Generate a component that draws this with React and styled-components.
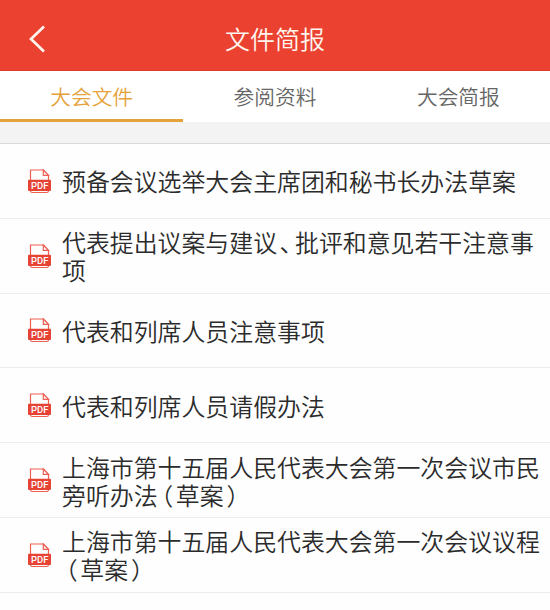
import { useState } from "react";
import styled, { createGlobalStyle } from "styled-components";

const GlobalStyle = createGlobalStyle`
  * {
    box-sizing: border-box;
  }

  body {
    margin: 0;
    background: #fefefe;
    font-family: "Noto Sans CJK SC", "Noto Sans", sans-serif;
  }
`;

const Page = styled.div`
  height: 610px;
  overflow: hidden;
  background: #fefefe;
`;

const Header = styled.header`
  height: 71px;
  padding-top: 7px;
  display: grid;
  grid-template-columns: 75px 1fr 75px;
  align-items: center;
  background: #eb4130;
  border-bottom: 1px solid #dc3c2b;
`;

const BackButton = styled.button`
  padding: 0 0 0 28px;
  border: none;
  background: none;
  display: flex;
  cursor: pointer;
`;

const Title = styled.h1`
  margin: 0;
  padding-bottom: 2px;
  font-size: 25px;
  line-height: 36px;
  font-weight: 350;
  text-align: center;
  color: #fff5ee;
`;

const Tabs = styled.nav`
  height: 51px;
  display: grid;
  grid-template-columns: repeat(3, 1fr);
  background: #fff;
`;

const Tab = styled.button`
  padding: 1px 0 0;
  border: none;
  border-bottom: 3px solid ${(props) => (props.$active ? "#e6a23a" : "transparent")};
  background: none;
  font-family: inherit;
  font-size: 20.7px;
  line-height: 30px;
  font-weight: 350;
  color: ${(props) => (props.$active ? "#e6a23a" : "#666")};
  cursor: pointer;
`;

const Spacer = styled.div`
  height: 22px;
  background: #f3f3f3;
  border-bottom: 1px solid #d9d9d9;
`;

const List = styled.ul`
  margin: 0;
  padding: 0;
  list-style: none;
`;

const Item = styled.li`
  height: 74.8px;
  padding: 1px 0 0 27px;
  display: flex;
  align-items: center;
  gap: 10px;
  border-bottom: 1px solid #ebebeb;
`;

const ItemTitle = styled.div`
  font-size: 23.9px;
  line-height: 28px;
  font-weight: 350;
  color: #2b2b2b;
  white-space: nowrap;
`;

// half-width punctuation with a little air on both sides
const Punct = styled.span`
  display: inline-block;
  font-feature-settings: "halt";
  margin-left: ${(props) => props.$left}px;
  margin-right: ${(props) => props.$right}px;
`;

const punctMargins = {
  "（": [3.7, 2.6],
  "）": [3, 3],
  "、": [2.5, 3.5],
};

const tabs = ["大会文件", "参阅资料", "大会简报"];

const files = [
  ["预备会议选举大会主席团和秘书长办法草案"],
  ["代表提出议案与建议、批评和意见若干注意事", "项"],
  ["代表和列席人员注意事项"],
  ["代表和列席人员请假办法"],
  ["上海市第十五届人民代表大会第一次会议市民", "旁听办法（草案）"],
  ["上海市第十五届人民代表大会第一次会议议程", "（草案）"],
];

function PdfIcon() {
  return (
    <svg width="25" height="25" viewBox="0 0 25 25" fill="none">
      <path
        d="M3.5 12V1H16.5L21.5 6.5V12M3.5 20V21.7Q3.5 23.5 5.3 23.5H19.7Q21.5 23.5 21.5 21.7V20"
        stroke="#ed5f52"
        strokeWidth="1.2"
      />
      <path d="M16.3 1V6.4H21.5Z" stroke="#ed5f52" strokeWidth="1.2" fill="#fff" />
      <rect x="1" y="10.8" width="23" height="11.1" rx="1" fill="#e74335" />
      <text
        x="4"
        y="19.8"
        fontFamily="Roboto, sans-serif"
        fontSize="9.6"
        fontWeight="500"
        textLength="17.4"
        lengthAdjust="spacingAndGlyphs"
        fill="#fff"
      >
        PDF
      </text>
    </svg>
  );
}

function Line({ text }) {
  return (
    <div>
      {text.split(/([（）、])/).map((part, i) =>
        punctMargins[part] ? (
          <Punct key={i} $left={punctMargins[part][0]} $right={punctMargins[part][1]}>
            {part}
          </Punct>
        ) : (
          part
        )
      )}
    </div>
  );
}

export default function App() {
  const [activeTab, setActiveTab] = useState(0);

  return (
    <Page>
      <GlobalStyle />
      <Header>
        <BackButton aria-label="返回">
          <svg width="18" height="28" viewBox="0 0 18 28" fill="none">
            <path d="M16 1.5L3 14L16 26.5" stroke="#fff5ee" strokeWidth="2.7" />
          </svg>
        </BackButton>
        <Title>文件简报</Title>
      </Header>
      <Tabs>
        {tabs.map((tab, i) => (
          <Tab key={tab} $active={i === activeTab} onClick={() => setActiveTab(i)}>
            {tab}
          </Tab>
        ))}
      </Tabs>
      <Spacer />
      <List>
        {files.map((lines) => (
          <Item key={lines.join("")}>
            <PdfIcon />
            <ItemTitle>
              {lines.map((line) => (
                <Line key={line} text={line} />
              ))}
            </ItemTitle>
          </Item>
        ))}
      </List>
    </Page>
  );
}
